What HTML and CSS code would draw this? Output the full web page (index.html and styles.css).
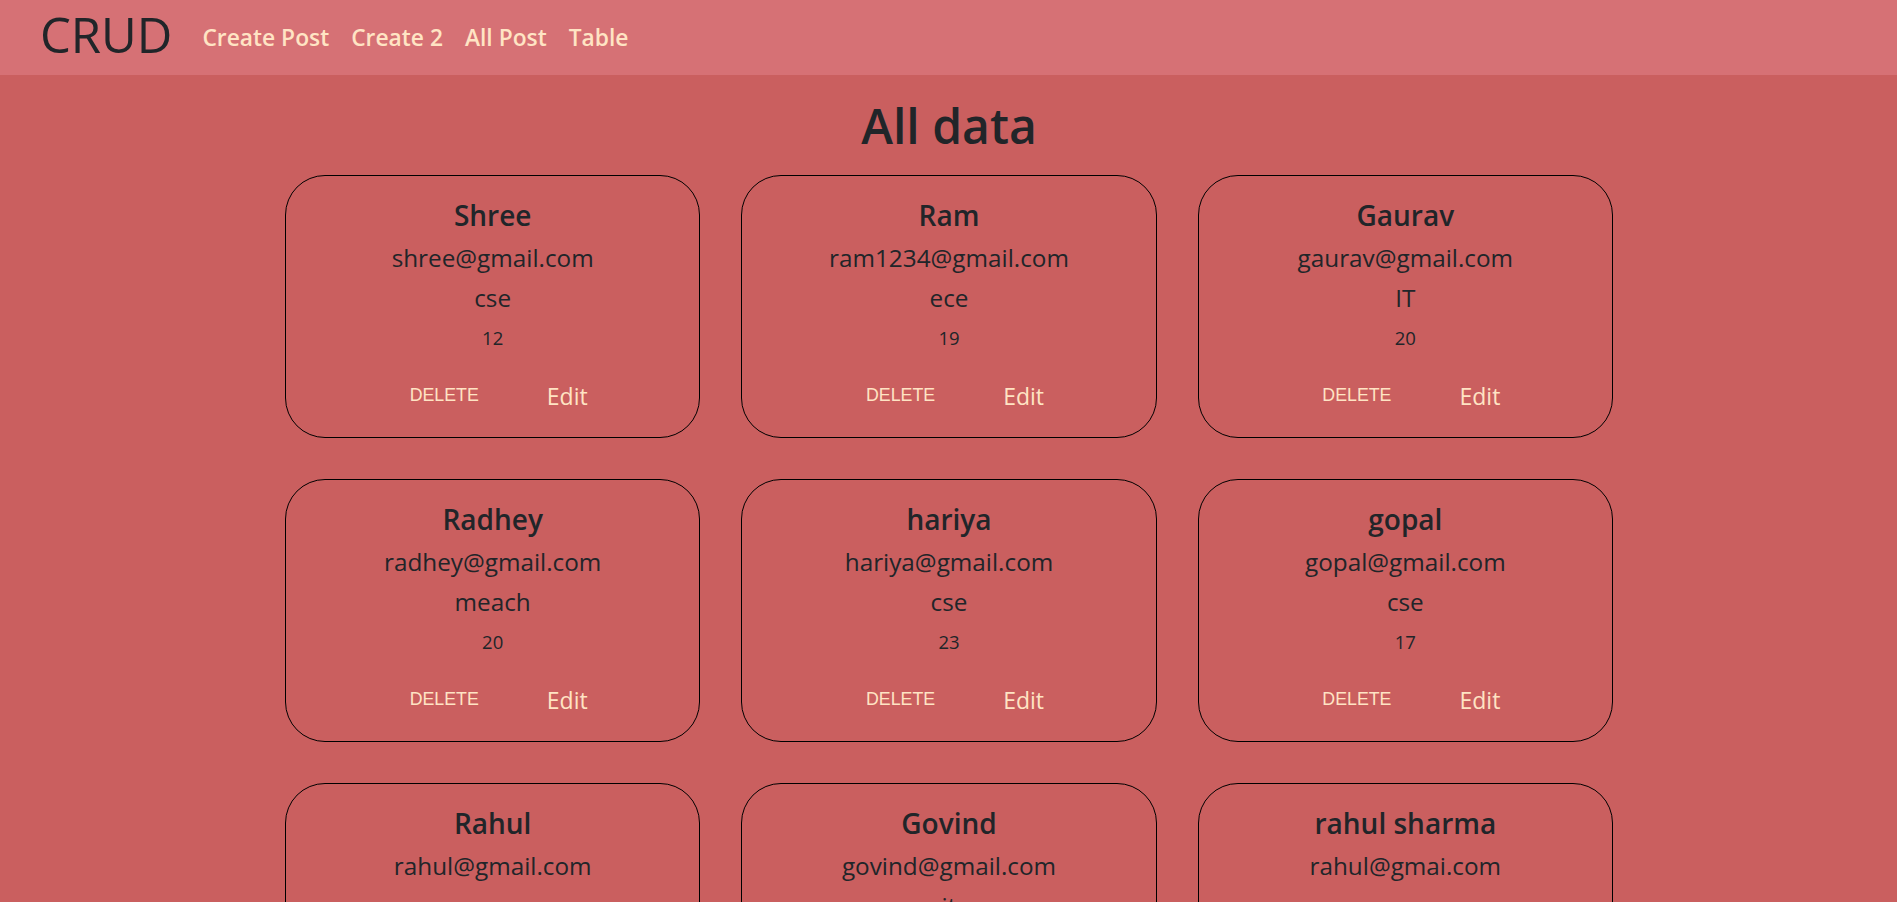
FILE: index.html
```html
<!DOCTYPE html>
<html lang="en">
<head>
<meta charset="utf-8">
<title>CRUD</title>
<link rel="stylesheet" href="styles.css">
</head>
<body>
<nav class="navbar">
  <a class="brand" href="#">CRUD</a>
  <ul class="nav-links">
    <li><a href="#">Create Post</a></li>
    <li><a href="#">Create 2</a></li>
    <li><a href="#">All Post</a></li>
    <li><a href="#">Table</a></li>
  </ul>
</nav>
<main class="page">
  <h1 class="title">All data</h1>
  <div class="grid">
    <div class="card"><h4 class="name">Shree</h4><h5 class="email">shree@gmail.com</h5><h5 class="branch">cse</h5><p class="age">12</p><div class="actions"><button class="btn-delete">DELETE</button><a class="btn-edit" href="#">Edit</a></div></div>
    <div class="card"><h4 class="name">Ram</h4><h5 class="email">ram1234@gmail.com</h5><h5 class="branch">ece</h5><p class="age">19</p><div class="actions"><button class="btn-delete">DELETE</button><a class="btn-edit" href="#">Edit</a></div></div>
    <div class="card"><h4 class="name">Gaurav</h4><h5 class="email">gaurav@gmail.com</h5><h5 class="branch">IT</h5><p class="age">20</p><div class="actions"><button class="btn-delete">DELETE</button><a class="btn-edit" href="#">Edit</a></div></div>
    <div class="card"><h4 class="name">Radhey</h4><h5 class="email">radhey@gmail.com</h5><h5 class="branch">meach</h5><p class="age">20</p><div class="actions"><button class="btn-delete">DELETE</button><a class="btn-edit" href="#">Edit</a></div></div>
    <div class="card"><h4 class="name">hariya</h4><h5 class="email">hariya@gmail.com</h5><h5 class="branch">cse</h5><p class="age">23</p><div class="actions"><button class="btn-delete">DELETE</button><a class="btn-edit" href="#">Edit</a></div></div>
    <div class="card"><h4 class="name">gopal</h4><h5 class="email">gopal@gmail.com</h5><h5 class="branch">cse</h5><p class="age">17</p><div class="actions"><button class="btn-delete">DELETE</button><a class="btn-edit" href="#">Edit</a></div></div>
    <div class="card"><h4 class="name">Rahul</h4><h5 class="email">rahul@gmail.com</h5><h5 class="branch">cse</h5><p class="age">21</p><div class="actions"><button class="btn-delete">DELETE</button><a class="btn-edit" href="#">Edit</a></div></div>
    <div class="card"><h4 class="name">Govind</h4><h5 class="email">govind@gmail.com</h5><h5 class="branch">it</h5><p class="age">22</p><div class="actions"><button class="btn-delete">DELETE</button><a class="btn-edit" href="#">Edit</a></div></div>
    <div class="card"><h4 class="name">rahul sharma</h4><h5 class="email">rahul@gmai.com</h5><h5 class="branch">cse</h5><p class="age">24</p><div class="actions"><button class="btn-delete">DELETE</button><a class="btn-edit" href="#">Edit</a></div></div>
  </div>
</main>
</body>
</html>
```
FILE: styles.css
```css
* { box-sizing: border-box; }
html, body { margin: 0; padding: 0; }
body {
  background: #ca5f5f;
  color: #212529;
  font-family: "Open Sans", "Noto Sans", sans-serif;
  overflow: hidden;
}
.navbar {
  height: 75px;
  background: #d67175;
  display: flex;
  align-items: flex-start;
  padding-left: 40px;
}
.brand {
  font-size: 49px;
  line-height: 69px;
  color: #212529;
  text-decoration: none;
  margin-right: 19px;
}
.nav-links {
  list-style: none;
  margin: 0;
  padding: 24px 0 0 0;
  display: flex;
}
.nav-links a {
  display: block;
  padding: 0 11px;
  font-size: 22.8px;
  line-height: 28px;
  font-weight: 600;
  color: #ffe4c4;
  text-decoration: none;
}
.page {
  padding-top: 23px;
  padding-left: 1px;
}
.title {
  margin: 0 0 22px 0;
  text-align: center;
  font-size: 48px;
  line-height: 55px;
  font-weight: 600;
}
.grid {
  width: 1328px;
  margin: 0 auto;
  display: grid;
  grid-template-columns: repeat(3, 1fr);
  column-gap: 41px;
  row-gap: 41px;
}
.card {
  height: 263px;
  border: 1px solid #000;
  border-radius: 40px;
  text-align: center;
  padding-top: 18px;
}
.name {
  margin: 0;
  font-size: 28px;
  line-height: 43px;
  font-weight: 600;
}
.email, .branch {
  margin: 0;
  font-size: 24.3px;
  line-height: 40px;
  font-weight: 500;
}
.email { line-height: 41px; }
.age {
  margin: 0;
  font-size: 18.5px;
  line-height: 40px;
}
.actions {
  display: flex;
  justify-content: center;
  align-items: flex-start;
  gap: 68px;
  padding-left: 12px;
  margin-top: 22px;
}
.btn-delete {
  background: none;
  border: 0;
  padding: 0;
  font-family: "Liberation Sans", Arial, sans-serif;
  font-size: 17.8px;
  line-height: 30px;
  color: #ffe4c4;
  cursor: pointer;
}
.btn-edit {
  font-size: 23px;
  line-height: 30px;
  margin-top: 1px;
  color: #ffe4c4;
  text-decoration: none;
}
```
